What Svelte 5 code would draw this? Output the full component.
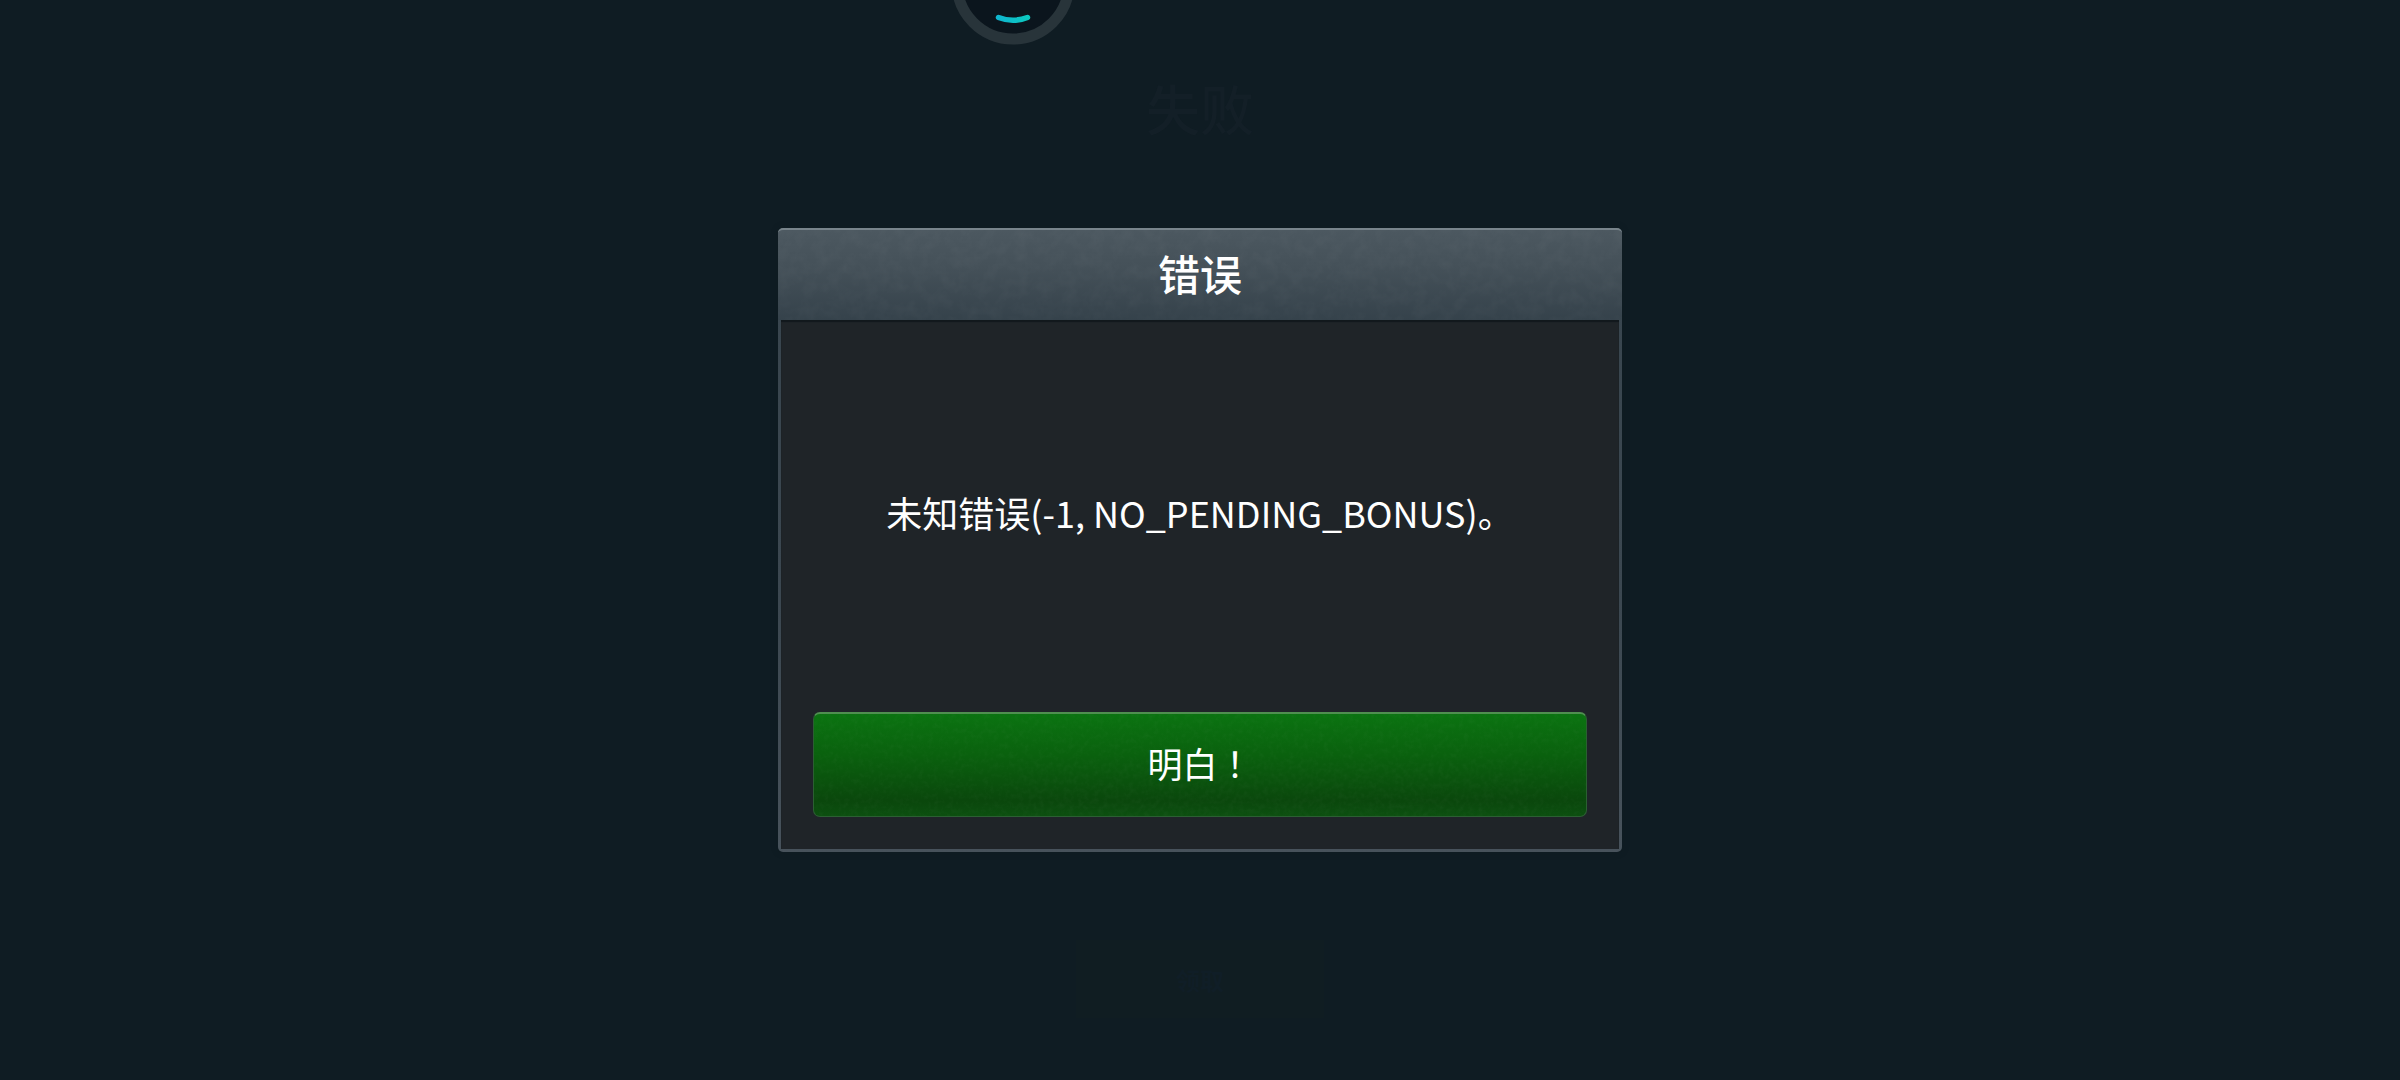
<script>
  let open = $state(true);

  const title = '错误';
  const message = '未知错误(-1, NO_PENDING_BONUS)。';
</script>

{#snippet grain(id, frequency)}
  <svg class="grain" aria-hidden="true">
    <filter {id}>
      <feTurbulence type="fractalNoise" baseFrequency={frequency} numOctaves="3" />
      <feColorMatrix values="0 0 0 0 1  0 0 0 0 1  0 0 0 0 1  0.5 0 0 0 -0.18" />
    </filter>
    <rect width="100%" height="100%" filter="url(#{id})" />
  </svg>
{/snippet}

<main class="screen">
  <svg class="spinner" viewBox="0 0 120 60" aria-hidden="true">
    <defs>
      <linearGradient id="smile" x1="0" x2="1">
        <stop offset="0" stop-color="#0fb6cf" />
        <stop offset="1" stop-color="#0cc8c0" />
      </linearGradient>
    </defs>
    <circle cx="60" cy="-17" r="56" fill="#0b151d" stroke="#28343a" stroke-width="11" />
    <path d="M45.5 17.5Q60 23 74.5 17.5" fill="none" stroke="url(#smile)" stroke-width="5.5" stroke-linecap="round" />
  </svg>
  <h1 class="result">失败</h1>
  <button class="claim" disabled={open}>领取</button>

  {#if open}
    <div class="overlay">
      <div class="dialog" role="alertdialog" aria-labelledby="dialog-title" aria-describedby="dialog-message">
        <h2 class="title" id="dialog-title">
          {@render grain('grain-title', '0.08')}
          <span class="label">{title}</span>
        </h2>
        <div class="body">
          <p class="message" id="dialog-message">{message}</p>
          <button class="confirm" onclick={() => (open = false)}>
            {@render grain('grain-confirm', '0.2')}
            <span class="label">明白！</span>
          </button>
        </div>
      </div>
    </div>
  {/if}
</main>

<style>
  :global(body) {
    margin: 0;
    background: #0f1c23;
  }

  .screen {
    position: relative;
    display: flex;
    flex-direction: column;
    min-height: 100vh;
    overflow: hidden;
    background: #0f1c23;
    color: #fff;
    font-family: 'Noto Sans CJK SC', sans-serif;
  }

  .spinner {
    display: block;
    width: 120px;
    height: 60px;
    margin-left: calc(50% - 247px);
  }

  .result {
    margin: 8px 0 0;
    color: #131f27;
    font-size: 54px;
    font-weight: 500;
    line-height: 80px;
    text-align: center;
  }

  .claim {
    align-self: center;
    width: 248px;
    height: 78px;
    margin-top: auto;
    margin-bottom: 62px;
    border: 0;
    background: #101d22;
    color: #101e27;
    font-family: inherit;
    font-size: 24px;
    font-weight: 700;
  }

  .overlay {
    position: absolute;
    inset: 0;
    display: flex;
    align-items: center;
    justify-content: center;
  }

  .dialog {
    box-sizing: border-box;
    display: flex;
    flex-direction: column;
    width: 844px;
    max-width: 100%;
    min-height: 624px;
    border-radius: 5px;
    background: linear-gradient(#38454e, #3b4750 60%, #47525b);
    box-shadow: 0 0 8px #0a141a22;
  }

  .title {
    position: relative;
    box-sizing: border-box;
    margin: 0;
    height: 92px;
    border-top: 2px solid #78848b;
    border-radius: 5px 5px 0 0;
    background: linear-gradient(#4c5860, #455159 40%, #35424b);
    font-size: 42px;
    font-weight: 500;
    line-height: 86px;
    text-align: center;
  }

  .grain {
    position: absolute;
    inset: 0;
    width: 100%;
    height: 100%;
    opacity: 0.1;
  }

  .label {
    position: relative;
  }

  .body {
    flex: 1;
    display: flex;
    flex-direction: column;
    margin: 0 3px 3px;
    padding: 0 32px 32px;
    background: #1f2428;
    box-shadow: inset 0 2px 1px #11181c;
  }

  .message {
    flex: 1;
    display: flex;
    align-items: center;
    justify-content: center;
    margin: 0 0 8px;
    font-size: 36px;
    line-height: 52px;
  }

  .confirm {
    position: relative;
    height: 105px;
    padding: 0 0 5px;
    overflow: hidden;
    border: 1px solid #2b5f32;
    border-top: 2px solid #4f8f50;
    border-radius: 7px;
    background: linear-gradient(#0b7311, #0a610e 40%, #0a470c 85%, #0c4f10);
    color: #fff;
    font-family: 'Noto Sans CJK TC', sans-serif;
    font-size: 35px;
    font-weight: 400;
    cursor: pointer;
  }
</style>
